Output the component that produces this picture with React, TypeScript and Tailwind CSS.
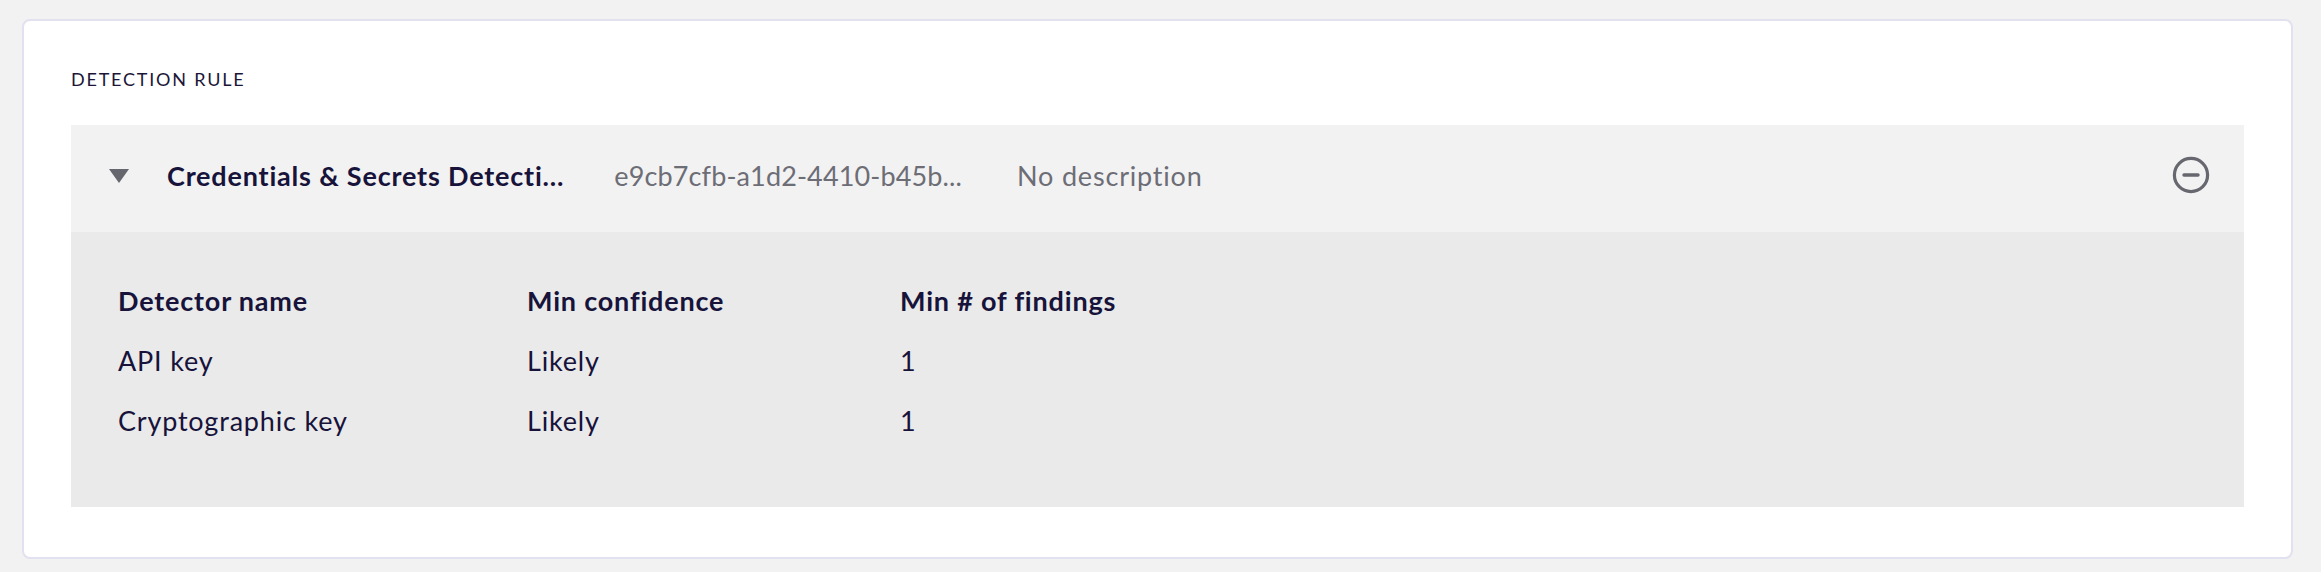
import React from 'react';

const detectors = [
  { name: 'API key', confidence: 'Likely', findings: 1 },
  { name: 'Cryptographic key', confidence: 'Likely', findings: 1 },
];

function MinusCircle() {
  return (
    <svg width="40" height="40" viewBox="0 0 40 40" fill="none">
      <circle cx="20" cy="20" r="16.6" stroke="#67676f" strokeWidth="3.2" />
      <line x1="13" y1="20" x2="27" y2="20" stroke="#67676f" strokeWidth="3.4" strokeLinecap="round" />
    </svg>
  );
}

export default function App() {
  return (
    <div
      className="min-h-[572px] w-[2321px] bg-[#f2f2f3] pt-[19px] pl-[22px] pr-[28px] pb-[15px]"
      style={{ fontFamily: 'Lato, "Noto Sans", sans-serif' }}
    >
      <div className="bg-white border-2 border-[#e1e1ef] rounded-[8px] px-[47px] pt-[44px] pb-[50px]">
        <h2 className="text-[18px] leading-[28px] tracking-[0.1em] text-[#1b1638] uppercase">
          Detection rule
        </h2>

        <div className="mt-[32px]">
          <div className="h-[107px] bg-[#f2f2f2] flex items-center pl-[38px] pr-[33px] pb-[5px]">
            <span className="w-0 h-0 border-l-[10px] border-r-[10px] border-t-[14px] border-l-transparent border-r-transparent border-t-[#66666e]" />
            <span className="ml-[38px] text-[27px] tracking-[0.03em] font-bold text-[#17133a] whitespace-nowrap">
              Credentials &amp; Secrets Detecti...
            </span>
            <span className="ml-[50px] text-[27px] tracking-[0.005em] text-[#6d6d76] whitespace-nowrap">
              e9cb7cfb-a1d2-4410-b45b...
            </span>
            <span className="ml-[55px] text-[27px] tracking-[0.03em] text-[#6d6d76] whitespace-nowrap">
              No description
            </span>
            <button type="button" className="ml-auto flex items-center justify-center pb-[2px]">
              <MinusCircle />
            </button>
          </div>

          <div className="h-[275px] bg-[#eaeaea] pl-[47px] pt-[50px]">
            <div className="grid grid-cols-[409px_373px_300px] text-[27px] tracking-[0.03em] text-[#17133a]">
              <div className="font-bold leading-[38px]">Detector name</div>
              <div className="font-bold leading-[38px]">Min confidence</div>
              <div className="font-bold leading-[38px]">Min # of findings</div>
              {detectors.map((d) => (
                <React.Fragment key={d.name}>
                  <div className="mt-[22px] leading-[38px]">{d.name}</div>
                  <div className="mt-[22px] leading-[38px]">{d.confidence}</div>
                  <div className="mt-[22px] leading-[38px]">{d.findings}</div>
                </React.Fragment>
              ))}
            </div>
          </div>
        </div>
      </div>
    </div>
  );
}
